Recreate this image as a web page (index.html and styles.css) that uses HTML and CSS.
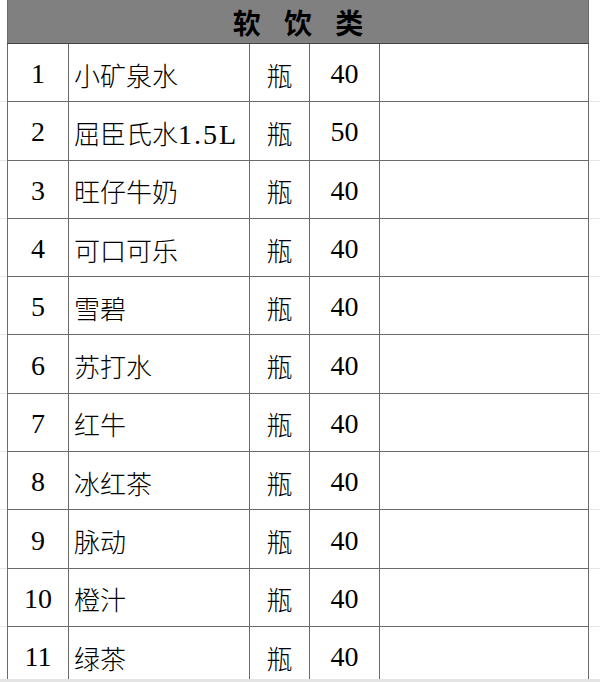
FILE: index.html
```html
<!DOCTYPE html>
<html lang="zh-CN">
<head>
<meta charset="utf-8">
<title>软饮类</title>
<link rel="stylesheet" href="styles.css">
</head>
<body>
<div class="sheet">
  <table class="menu">
    <colgroup>
      <col class="c-no"><col class="c-name"><col class="c-unit"><col class="c-price"><col class="c-note">
    </colgroup>
    <thead>
      <tr><th colspan="5" class="title">软 饮 类</th></tr>
    </thead>
    <tbody>
      <tr><td class="no">1</td><td class="name">小矿泉水</td><td class="unit">瓶</td><td class="price">40</td><td></td></tr>
      <tr><td class="no">2</td><td class="name">屈臣氏水<span class="half">1.5L</span></td><td class="unit">瓶</td><td class="price">50</td><td></td></tr>
      <tr><td class="no">3</td><td class="name">旺仔牛奶</td><td class="unit">瓶</td><td class="price">40</td><td></td></tr>
      <tr><td class="no">4</td><td class="name">可口可乐</td><td class="unit">瓶</td><td class="price">40</td><td></td></tr>
      <tr><td class="no">5</td><td class="name">雪碧</td><td class="unit">瓶</td><td class="price">40</td><td></td></tr>
      <tr><td class="no">6</td><td class="name">苏打水</td><td class="unit">瓶</td><td class="price">40</td><td></td></tr>
      <tr><td class="no">7</td><td class="name">红牛</td><td class="unit">瓶</td><td class="price">40</td><td></td></tr>
      <tr><td class="no">8</td><td class="name">冰红茶</td><td class="unit">瓶</td><td class="price">40</td><td></td></tr>
      <tr><td class="no">9</td><td class="name">脉动</td><td class="unit">瓶</td><td class="price">40</td><td></td></tr>
      <tr><td class="no">10</td><td class="name">橙汁</td><td class="unit">瓶</td><td class="price">40</td><td></td></tr>
      <tr><td class="no">11</td><td class="name">绿茶</td><td class="unit">瓶</td><td class="price">40</td><td></td></tr>
    </tbody>
  </table>
</div>
<div class="hscroll"></div>
</body>
</html>
```

FILE: styles.css
```css
html, body {
  margin: 0;
  padding: 0;
  background: #ffffff;
  overflow: hidden;
}

.sheet {
  height: 682px;
  overflow: hidden;
  padding-left: 7px;
  background:
    repeating-linear-gradient(to bottom,
      transparent 0, transparent 57.3px,
      #e6e6e6 57.3px, #e6e6e6 58.3px) 0 44px / 100% 100% no-repeat;
}

.menu {
  border-collapse: collapse;
  table-layout: fixed;
  width: 581px;
  background: #ffffff;
  font-family: "Liberation Serif", "Noto Sans CJK SC", serif;
  font-size: 28px;
  color: #000000;
}

.c-no { width: 61px; }
.c-name { width: 181px; }
.c-unit { width: 60px; }
.c-price { width: 70px; }
.c-note { width: 209px; }

.menu td,
.menu th {
  border: 1px solid #6a6a6a;
  padding: 0;
}

.title {
  height: 43px;
  background: #808080;
  border-top: 0 !important;
  border-bottom: 1px solid #444444 !important;
  font-family: "Noto Sans CJK SC", sans-serif;
  font-weight: 700;
  font-size: 28px;
  word-spacing: 17px;
  text-align: center;
  color: #000000;
  line-height: 40px;
  padding-bottom: 2px;
}

.menu td {
  height: 58.3px;
  padding-top: 3px;
  box-sizing: border-box;
}

.no, .unit, .price {
  text-align: center;
}

.name {
  font-family: "Noto Sans CJK SC", sans-serif;
  font-weight: 300;
  font-size: 26px;
  padding-left: 5px !important;
  white-space: nowrap;
}

.unit {
  font-family: "Noto Sans CJK SC", sans-serif;
  font-weight: 300;
  font-size: 26px;
}

.half {
  font-family: "Liberation Serif", serif;
  font-size: 28px;
  letter-spacing: 2px;
}

.hscroll {
  position: fixed;
  left: 0;
  right: 0;
  bottom: 0;
  height: 3px;
  background: #e4e4e4;
}
```
